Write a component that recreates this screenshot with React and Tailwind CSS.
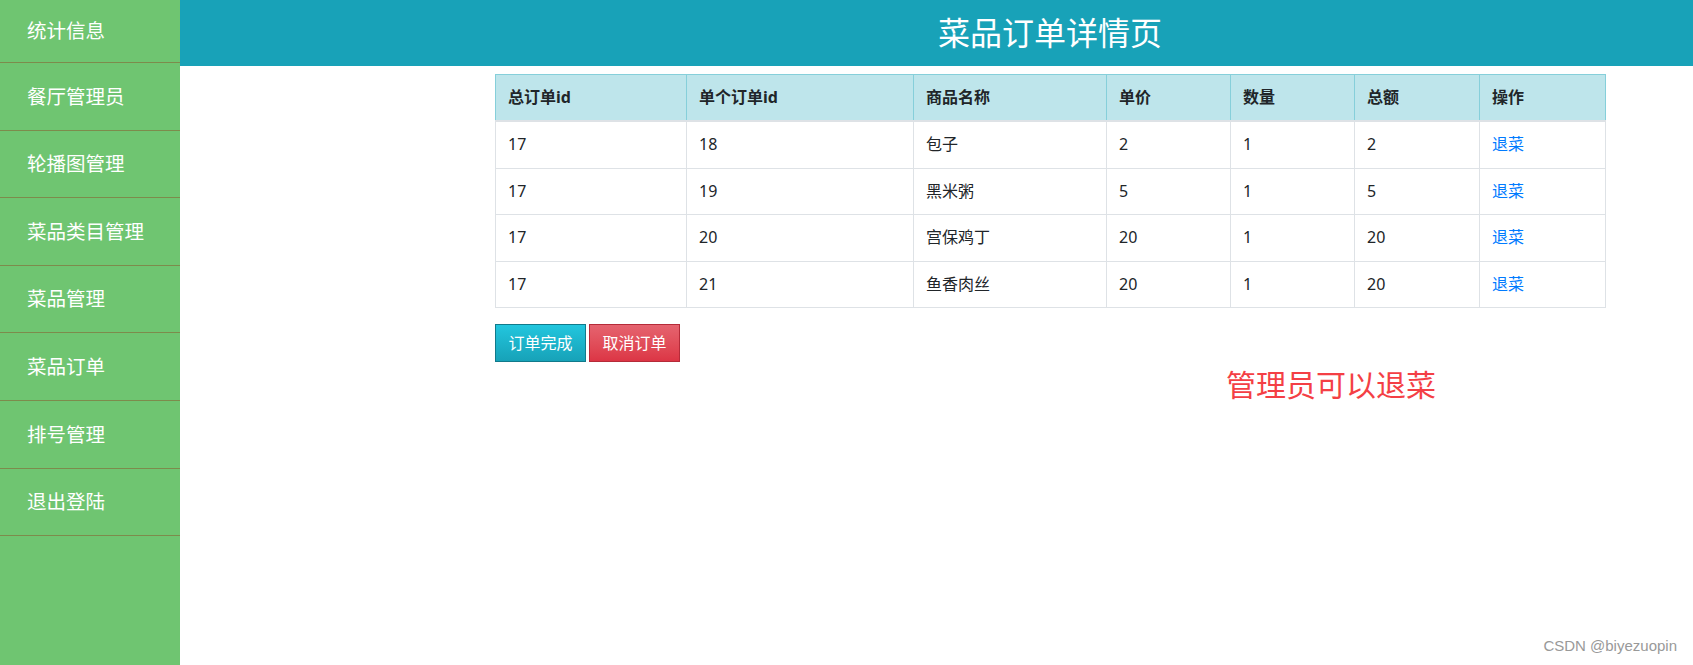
const MENU = ["统计信息", "餐厅管理员", "轮播图管理", "菜品类目管理", "菜品管理", "菜品订单", "排号管理", "退出登陆"];

const COLS = [
  { label: "总订单id", w: "w-[191px]" },
  { label: "单个订单id", w: "w-[227px]" },
  { label: "商品名称", w: "w-[193px]" },
  { label: "单价", w: "w-[124px]" },
  { label: "数量", w: "w-[124px]" },
  { label: "总额", w: "w-[125px]" },
  { label: "操作", w: "w-[126px]" },
];

const ROWS = [
  { oid: 17, sid: 18, name: "包子", price: 2, qty: 1, total: 2 },
  { oid: 17, sid: 19, name: "黑米粥", price: 5, qty: 1, total: 5 },
  { oid: 17, sid: 20, name: "宫保鸡丁", price: 20, qty: 1, total: 20 },
  { oid: 17, sid: 21, name: "鱼香肉丝", price: 20, qty: 1, total: 20 },
];

const FONT = { fontFamily: "'Noto Sans', 'Noto Sans CJK SC', sans-serif" };

export default function App() {
  return (
    <div className="flex w-[1693px] h-[665px] bg-white overflow-hidden relative" style={FONT}>
      {/* Sidebar */}
      <div className="w-[180px] shrink-0 h-full bg-[#6fc571]">
        {MENU.map((m, i) => (
          <div key={m}
            className={`${i === 0 ? "h-[63px]" : "h-[67.6px]"} border-b border-[#7d8b4c] flex items-center pl-[27px] text-[19.5px] text-white`}>
            {m}
          </div>
        ))}
      </div>

      {/* Main */}
      <div className="flex-1 flex flex-col">
        <div className="h-[66px] bg-[#18a2b8] flex items-center pl-[758px] text-[32px] text-white leading-none">
          菜品订单详情页
        </div>

        <div className="pl-[315px] pt-[8px]">
          <table className="border-collapse text-[16px] leading-[21.4px] text-[#212529] w-[1110px] table-fixed">
            <thead>
              <tr className="bg-[#bee5eb]">
                {COLS.map(c => (
                  <th key={c.label}
                    className={`${c.w} text-left font-bold px-[12px] pt-[12px] pb-[12px] border border-[#86cfda] border-b-2 border-b-[#dee2e6]`}>
                    {c.label}
                  </th>
                ))}
              </tr>
            </thead>
            <tbody>
              {ROWS.map(r => (
                <tr key={r.sid}>
                  {[r.oid, r.sid, r.name, r.price, r.qty, r.total].map((v, i) => (
                    <td key={i} className="px-[12px] py-[12px] border border-[#dee2e6]">{v}</td>
                  ))}
                  <td className="px-[12px] py-[12px] border border-[#dee2e6] text-[#007bff]">退菜</td>
                </tr>
              ))}
            </tbody>
          </table>

          <div className="flex gap-[3px] mt-[16px]">
            <button className="h-[38px] w-[91px] text-[16px] text-white border border-[#117a8b] bg-gradient-to-b from-[#22c6de] to-[#17a2b8]">
              订单完成
            </button>
            <button className="h-[38px] w-[91px] text-[16px] text-white border border-[#b52b39] bg-gradient-to-b from-[#e5636f] to-[#dc3545]">
              取消订单
            </button>
          </div>

          <div className="pl-[731px] mt-[3px] text-[30px] leading-[40px] text-[#f43f45]">
            管理员可以退菜
          </div>
        </div>
      </div>

      <div className="absolute right-[16px] bottom-[8px] text-[15px] text-[#999999]" style={{ fontFamily: "'Liberation Sans', Arial, sans-serif" }}>
        CSDN @biyezuopin
      </div>
    </div>
  );
}
